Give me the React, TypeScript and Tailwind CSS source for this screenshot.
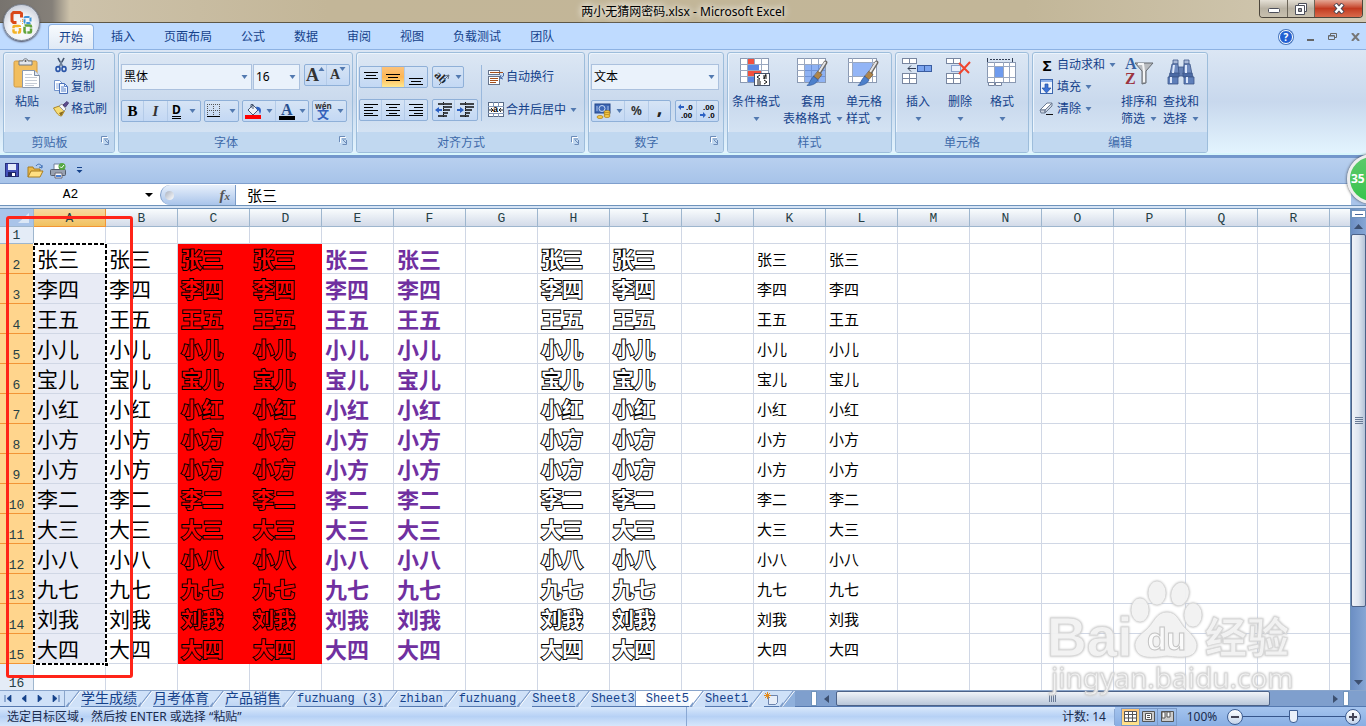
import type { ReactNode } from "react";
import clsx from "clsx";

const names = ["张三", "李四", "王五", "小儿", "宝儿", "小红", "小方", "小方", "李二", "大三", "小八", "九七", "刘我", "大四"];
const columns = "ABCDEFGHIJKLMNOPQR".split("");
const menuTabs = ["开始", "插入", "页面布局", "公式", "数据", "审阅", "视图", "负载测试", "团队"];
const sheets = ["学生成绩", "月考体育", "产品销售", "fuzhuang (3)", "zhiban", "fuzhuang", "Sheet8", "Sheet3", "Sheet5", "Sheet1"];

const cellStyles: Record<string, string> = {
  A: "text-[21px] text-black",
  B: "text-[21px] text-black",
  C: "text-[21px] font-bold text-[#f00] [-webkit-text-stroke:2px_black] [paint-order:stroke_fill]",
  D: "text-[21px] font-bold text-[#f00] [-webkit-text-stroke:2px_black] [paint-order:stroke_fill]",
  E: "text-[22px] font-bold text-[#7030a0]",
  F: "text-[22px] font-bold text-[#7030a0]",
  H: "text-[21px] font-bold text-white [-webkit-text-stroke:2px_black] [paint-order:stroke_fill]",
  I: "text-[21px] font-bold text-white [-webkit-text-stroke:2px_black] [paint-order:stroke_fill]",
  K: "text-[15px] text-black",
  L: "text-[15px] text-black",
};

const Arrow = ({ className = "" }: { className?: string }) => (
  <svg className={clsx("shrink-0", className)} width="7" height="4" viewBox="0 0 7 4">
    <path d="M0.5 0h6L3.5 4z" fill="#5279b0" />
  </svg>
);

/* ---------- small icons ---------- */

const ScissorsIcon = () => (
  <svg width="16" height="16" viewBox="0 0 16 16" fill="none">
    <path d="M5 1l5 9M11 1L6 10" stroke="#6d7f99" strokeWidth="1.6" />
    <path d="M5 1l2 4M11 1L9 5" stroke="#3c4b62" />
    <ellipse cx="5" cy="12" rx="2" ry="2.4" stroke="#2b56a8" strokeWidth="1.6" />
    <ellipse cx="11" cy="12" rx="2" ry="2.4" stroke="#2b56a8" strokeWidth="1.6" />
  </svg>
);

const CopyIcon = () => (
  <svg width="16" height="16" viewBox="0 0 16 16">
    <path d="M1.5 1.5h5l3 3v7h-8z" fill="#fff" stroke="#7394cc" />
    <path d="M3 5h4M3 7h5M3 9h5" stroke="#8eade0" />
    <path d="M6.500 4.500h5l3 3v7h-8z" fill="#f3f8ff" stroke="#4a71b8" />
    <path d="M11.500 4.500v3h3M8 8h3M8 10h5M8 12h5" stroke="#5b83ca" fill="none" />
  </svg>
);

const BrushIcon = () => (
  <svg width="16" height="16" viewBox="0 0 16 16">
    <path d="M0.500 7l6-2 5 5-3 5c-3 0-5-3-8-8z" fill="#f6dc74" stroke="#ad8622" />
    <path d="M6 12l2 3 3-5z" fill="#8a6a1e" />
    <path d="M6 5l3-2 4 5-2 2z" fill="#f6f7fa" stroke="#999" />
    <path d="M10 4l4-3.500 1.500 1.500L12.500 6z" fill="#5f4d8e" stroke="#473a72" />
  </svg>
);

const LauncherIcon = () => (
  <svg width="9" height="9" viewBox="0 0 9 9" fill="none">
    <path d="M0.500 6V0.500H6" stroke="#6b8bb8" />
    <path d="M3 3h4M7.500 4v4.500H3.500M4 4l3 3" stroke="#6b8bb8" />
    <path d="M1.500 7V1.500H7" stroke="#fff" />
  </svg>
);

const lineSets: Record<string, number[][]> = {
  top: [[1, 3, 14], [3, 6, 10], [1, 9, 14]],
  middle: [[1, 5, 14], [3, 8, 10], [1, 11, 14]],
  bottom: [[1, 9, 14], [3, 12, 10], [1, 15, 14]],
  left: [[1, 2, 14], [1, 5, 9], [1, 8, 14], [1, 11, 9], [1, 13, 14]],
  center: [[1, 2, 14], [4, 5, 8], [1, 8, 14], [4, 11, 8], [1, 13, 14]],
  right: [[1, 2, 14], [6, 5, 9], [1, 8, 14], [6, 11, 9], [1, 13, 14]],
};

const LinesIcon = ({ kind }: { kind: string }) => (
  <svg width="16" height="17" viewBox="0 0 16 17">
    {lineSets[kind].map(([x, y, w]) => (
      <rect key={y} x={x} y={y} width={w} height="1" fill="#000" />
    ))}
  </svg>
);

const IndentIcon = ({ out = false }: { out?: boolean }) => (
  <svg width="18" height="16" viewBox="0 0 18 16">
    <path d="M3 2h14M3 14h9M8 5h9M8 8h7M8 11h5" stroke="#111" strokeWidth="1.500" />
    <path d="M8.500 0v16" stroke="#111" strokeDasharray="1 1" />
    {out ? <path d="M0 8l4-3v2h3v2H4v2z" fill="#2d62c4" /> : <path d="M7 8L3 5v2H0v2h3v2z" fill="#2d62c4" />}
  </svg>
);

const OrientationIcon = () => (
  <svg className="overflow-visible" width="17" height="17" viewBox="0 0 17 17">
    <text x="0" y="10" transform="rotate(45 4 8)" fontFamily="Liberation Serif" fontWeight="bold" fontSize="12" fill="#222">ab</text>
    <path d="M5 16L15 6M15 6l-4 1M15 6l-1 4" stroke="#5e6c80" fill="none" />
  </svg>
);

const WrapIcon = () => (
  <svg width="17" height="16" viewBox="0 0 17 16" fill="none">
    <rect x="0.500" y="1.500" width="11" height="4" fill="#fff" stroke="#66748c" />
    <path d="M2 3.500h13" stroke="#a5501c" />
    <rect x="0.500" y="7.500" width="11" height="8" fill="#fff" stroke="#66748c" />
    <path d="M2 9.500h8M2 11.500h8M2 13.500h6" stroke="#a5501c" />
    <path d="M15.500 4v3l-3 2M12 9l1-3M12 9l3 1" stroke="#4a6da8" />
  </svg>
);

const MergeIcon = () => (
  <svg width="17" height="16" viewBox="0 0 17 16">
    <rect x="0.500" y="0.500" width="15" height="14" fill="#fff" stroke="#596b87" />
    <path d="M0 4.500h16M0 11.500h16M5.500 0v4M10.500 0v4M5.500 11v4M10.500 11v4" stroke="#8095b5" />
    <text x="5" y="10" fontFamily="Liberation Sans" fontWeight="bold" fontSize="9">a</text>
    <path d="M1 8h3M3 6l2 2-2 2M15 8h-3M13 6l-2 2 2 2" stroke="#222" fill="none" />
  </svg>
);

const BordersIcon = () => (
  <svg width="14" height="14" viewBox="0 0 14 14" fill="none">
    <path d="M0.500 0v12M6.500 0v12M12.500 0v12M0 0.500h13M0 6.500h13" stroke="#555" strokeDasharray="1 1" />
    <path d="M0 12.500h13" stroke="#000" strokeWidth="1" />
  </svg>
);

const FillColorIcon = () => (
  <svg width="17" height="16" viewBox="0 0 17 16">
    <path d="M3 7l5-5 5 5-5 5z" fill="#eef2f8" stroke="#4b5a73" />
    <path d="M6 5V1.500h2V6" fill="none" stroke="#4b5a73" />
    <path d="M11 4c5-1 6 4 4 7-1-1 0-4-3-4z" fill="#2c60c0" />
    <rect x="0" y="12" width="16" height="4" fill="#f00" />
  </svg>
);

const FontColorIcon = () => (
  <svg className="overflow-visible" width="16" height="17" viewBox="0 0 16 17">
    <text x="2" y="12" fontFamily="Liberation Serif" fontWeight="bold" fontSize="16" fill="#28508e">A</text>
    <rect x="0" y="13" width="16" height="4" />
  </svg>
);

const PinyinIcon = () => (
  <svg className="overflow-visible" width="18" height="18" viewBox="0 0 18 18">
    <text x="0" y="7" fontFamily="Noto Sans" fontWeight="bold" fontSize="8" fill="#333">wén</text>
    <text x="2" y="17" fontFamily="Noto Sans CJK SC" fontWeight="bold" fontSize="12" fill="#3560ba">文</text>
  </svg>
);

const CurrencyIcon = () => (
  <svg width="18" height="17" viewBox="0 0 18 17">
    <rect x="1" y="1" width="15" height="9" fill="#3e68b5" stroke="#254789" />
    <ellipse cx="8" cy="5.500" rx="3" ry="3" fill="none" stroke="#c7d9f5" />
    <path d="M3 3v5M14 3v5" stroke="#a7c0ea" />
    {[9, 11, 13].map((y) => <ellipse key={y} cx="13" cy={y} rx="3" ry="1.500" fill="#f7cb4a" stroke="#a97a12" strokeWidth="0.700" />)}
    <ellipse cx="6" cy="14" rx="3" ry="1.500" fill="#f7cb4a" stroke="#a97a12" strokeWidth="0.700" />
  </svg>
);

const DecimalIcon = ({ more = false }: { more?: boolean }) => (
  <svg className="overflow-visible" width="18" height="16" viewBox="0 0 18 16" fontFamily="Liberation Sans" fontWeight="bold" fontSize="8">
    {more ? (
      <>
        <path d="M1 4l3-3v2h3v2H4v2z" fill="#2d62c4" />
        <text x="9" y="7">.0</text>
        <text x="4" y="15">.00</text>
      </>
    ) : (
      <>
        <text x="4" y="7">.00</text>
        <path d="M7 12L4 9v2H1v2h3v2z" fill="#2d62c4" />
        <text x="9" y="15">.0</text>
      </>
    )}
  </svg>
);

const FillDownIcon = () => (
  <svg width="14" height="16" viewBox="0 0 14 16">
    <rect x="0.500" y="0.500" width="12" height="14" fill="#eef4fd" stroke="#3b66ad" />
    <rect x="1" y="1" width="11" height="2" fill="#8cb0ea" />
    <path d="M5 5h3v4h3l-4.500 5L2 9h3z" fill="#3c73d8" stroke="#24509f" strokeWidth="0.700" />
  </svg>
);

const EraserIcon = () => (
  <svg width="16" height="14" viewBox="0 0 16 14">
    <path d="M1 8l7-7h5l-7 7z" fill="#fff" stroke="#6c7c94" />
    <path d="M1 8h5v3H2zM6 8l7-7v3l-7 7z" fill="#ccd3df" stroke="#6c7c94" />
    <path d="M7 12.500h7" stroke="#111" />
  </svg>
);

const SaveIcon = () => (
  <svg width="15" height="15" viewBox="0 0 15 15">
    <rect x="0.500" y="0.500" width="13" height="13" fill="#4450b8" stroke="#28307d" />
    <rect x="3" y="1" width="8" height="6" fill="#e5ebfa" />
    <rect x="3" y="9" width="8" height="5" fill="#1e2566" />
    <rect x="7" y="10" width="3" height="3" fill="#fff" />
  </svg>
);

const OpenIcon = () => (
  <svg width="17" height="16" viewBox="0 0 17 16">
    <path d="M1 14V4h5l1 2h6v3" fill="#e9b84a" stroke="#a77c21" />
    <path d="M1 14l3-6h12l-3 6z" fill="#ffdf83" stroke="#a77c21" />
    <path d="M9 3c2-3 5-2 6 1M15 5V2M15 5l-3-1" fill="none" stroke="#3f6fb5" />
  </svg>
);

const PrintIcon = () => (
  <svg width="17" height="16" viewBox="0 0 17 16">
    <path d="M4 6V1h7v5" fill="#fff" stroke="#70819b" />
    <rect x="0.500" y="6.500" width="15" height="6" rx="1" fill="#98a1b0" stroke="#555e6d" />
    <path d="M5 10h7v5H5z" fill="#fff" stroke="#667" />
    <circle cx="12" cy="3.500" r="3.500" fill="#55a843" />
    <path d="M10 3.500l1.500 1.500L14 2" stroke="#fff" fill="none" />
    <path d="M6 13h5" stroke="#4a7fd1" strokeWidth="2" />
  </svg>
);

/* ---------- large ribbon icons ---------- */

const PasteIcon = () => (
  <svg width="28" height="32" viewBox="0 0 28 32">
    <rect x="1" y="3" width="23" height="26" rx="1.500" fill="#f2be5e" stroke="#d09a45" />
    <path d="M6 3h4c0-3 5-3 5 0h4v4H6z" fill="#e3e6ea" stroke="#6f7885" />
    <circle cx="12.500" cy="3" r="1" fill="#555" />
    <path d="M9.500 12.500h12l5 5v12h-17z" fill="#fff" stroke="#8b99ae" />
    <path d="M21.500 12.500v5h5" fill="#dfe6f1" stroke="#7d8ca3" />
    <path d="M12 16.500h7M12 19.500h12M12 22.500h12M12 25.500h12M12 27.500h9" stroke="#c6ccd6" />
  </svg>
);

const GridBase = () => (
  <>
    <rect x="0.500" y="0.500" width="28" height="24" fill="#fff" stroke="#8a99b2" />
    <path d="M7.500 0v25M14.500 0v25M21.500 0v25M0 6.500h28M0 12.500h28M0 18.500h28" stroke="#9aa8c0" />
  </>
);

const PaintBrush = () => (
  <g strokeLinecap="round">
    <path d="M28.500 4.500L22 15" stroke="#6d6a66" strokeWidth="4" />
    <path d="M28 4.500L21.500 15" stroke="#e4e4e6" strokeWidth="2" />
    <path d="M21 13.500l4 3-4 5-4-3z" fill="#b08548" stroke="#76552a" strokeWidth="0.700" />
    <path d="M16.500 18.500l4.500 3.500c-2 4-6 5.500-11 5.500 3-2 3-6 6.500-9z" fill="#4d80cb" stroke="#2f589b" strokeWidth="0.700" />
  </g>
);

const ConditionalIcon = () => (
  <svg width="32" height="32" viewBox="0 0 32 32">
    <GridBase />
    <path d="M8 1h6v5H8zM8 13h13v5H8z" fill="#f2503e" />
    <path d="M8 7h11v5H8zM8 19h6v5H8z" fill="#5a86e2" />
    <rect x="14.500" y="15.500" width="15" height="12" fill="#fff" stroke="#46536b" />
    <path d="M20 17l-3 2 3 2M17 22h3M23 18h4M23 20h4M26 16l-2 5M17 24h4M17 26h4M24 22l3 2-3 2" stroke="#111" fill="none" />
  </svg>
);

const TableFormatIcon = () => (
  <svg width="32" height="32" viewBox="0 0 32 32">
    <GridBase />
    <path d="M8 7h20v17H8z" fill="#8eb2f3" />
    <path d="M14.500 7v17M21.500 7v17M8 12.500h20M8 18.500h20" stroke="#6d92d8" />
    <PaintBrush />
  </svg>
);

const CellStyleIcon = () => (
  <svg width="32" height="32" viewBox="0 0 32 32">
    <rect x="0.500" y="0.500" width="28" height="24" fill="#fff" stroke="#8a99b2" />
    <path d="M4.500 0v24M24.500 0v24M0 4.500h28M0 18.500h28" stroke="#9aa8c0" />
    <rect x="5" y="5" width="19" height="13" fill="#93b5f6" />
    <PaintBrush />
  </svg>
);

const SheetBlocks = () => (
  <>
    <rect x="0.500" y="0.500" width="14" height="5" fill="#fff" stroke="#7886a0" />
    <path d="M7.500 0v6" stroke="#7886a0" />
    <rect x="0.500" y="15.500" width="14" height="10" fill="#fff" stroke="#7886a0" />
    <path d="M7.500 15v10M0 20.500h14" stroke="#7886a0" />
  </>
);

const InsertCellsIcon = () => (
  <svg width="32" height="32" viewBox="0 0 32 32">
    <SheetBlocks />
    <path d="M6 10.500h8M6 10.500l3-3M6 10.500l3 3" stroke="#333f55" fill="none" />
    <rect x="15.500" y="7.500" width="14" height="6" fill="#7ba4ee" stroke="#3a5da1" />
    <path d="M22.500 8v6" stroke="#3a5da1" />
  </svg>
);

const DeleteCellsIcon = () => (
  <svg width="28" height="32" viewBox="0 0 28 32">
    <SheetBlocks />
    <path d="M5.500 7.500h9v6h-9z" stroke="#3a5da1" strokeDasharray="1 1" fill="#eaf1fd" />
    <path d="M13 5l10 10M24 4L13 16" stroke="#f0452e" strokeWidth="2" />
  </svg>
);

const FormatCellsIcon = () => (
  <svg width="32" height="32" viewBox="0 0 32 32">
    <path d="M1.500 0v4M26.500 0v4" stroke="#333f55" />
    <path d="M4 1.500h20" stroke="#333f55" strokeDasharray="2 1" />
    <rect x="1.500" y="4.500" width="28" height="20" fill="#fff" stroke="#8a99b2" />
    <path d="M8.500 4v20M17.500 4v20M23.500 4v20M1 8.500h28M1 19.500h28" stroke="#9aa8c0" />
    <rect x="9" y="9" width="8" height="10" fill="#6e9bee" />
    <path d="M2.500 24.500h6v3h-6zM9.500 24.500h6v3h-6z" fill="#fff" stroke="#7886a0" />
  </svg>
);

const SortIcon = () => (
  <svg className="overflow-visible" width="32" height="32" viewBox="0 0 32 32">
    <text x="2" y="11" fontFamily="Liberation Serif" fontWeight="bold" fontSize="16" fill="#36609f">A</text>
    <text x="2" y="26" fontFamily="Liberation Serif" fontWeight="bold" fontSize="16" fill="#9c3440">Z</text>
    <path d="M12 5h18l-7 8v12l-4 1V13z" fill="#b9bcc0" stroke="#65696f" />
    <path d="M15 6h5l1 7v11" fill="none" stroke="#f4f5f6" strokeWidth="2" />
  </svg>
);

const BinocularsIcon = () => (
  <svg width="30" height="32" viewBox="0 0 30 32" stroke="#3c5588" strokeWidth="0.800">
    <rect x="12" y="9" width="6" height="9" fill="#6580b3" />
    <path d="M7 2h5v4H7zM18 2h5v4h-5z" fill="#a9b9d8" />
    <path d="M6 6h6l1 10H4zM18 6h6l2 10h-9z" fill="#6f8bbf" />
    <path d="M4 15h9v4H3zM17 15h9l1 4H17z" fill="#4b6aa4" />
    <path d="M2 19h10v7H2zM18 19h10v7H18z" fill="#5f7fb9" />
    <path d="M5 19v6M21 19v6M8 7l-1 8M20 7v8" stroke="#dce7fa" strokeWidth="2" />
  </svg>
);

const OfficeLogo = () => (
  <svg width="24" height="24" viewBox="0 0 24 24" fill="none">
    <path d="M11.500 6.500V2.500L10 1.500H3.500L2 3v7l1.500 1.500h3" stroke="#d9481a" strokeWidth="3" />
    <rect x="14.500" y="6" width="6" height="6" rx="1" stroke="#3f93d6" strokeWidth="2" strokeDasharray="4 1" />
    <rect x="3.500" y="15" width="6.500" height="6.500" rx="1" stroke="#f3b226" strokeWidth="2.500" strokeDasharray="6 1" />
    <rect x="14.500" y="14.500" width="6.500" height="7" rx="1" stroke="#62a33a" strokeWidth="2.500" strokeDasharray="7 1" />
    <path d="M10 10h4M12.500 8v6" stroke="#f0a648" strokeDasharray="1 1" />
  </svg>
);

/* ---------- ribbon building blocks ---------- */

const Group = ({ title, width, launcher = false, children }: { title: string; width: string; launcher?: boolean; children: ReactNode }) => (
  <section className={clsx("flex shrink-0 flex-col overflow-hidden rounded-[3px] border border-[#9dbddb] bg-linear-to-b from-[#dce7f4] via-[#c9d9ed] to-[#dbe9f7] shadow-[inset_1px_1px_0_#ecf4fc]", width)}>
    <div className="flex h-[79px]">{children}</div>
    <div className="flex h-5 items-center bg-[#c1d8f0] pt-px text-[#3e6aaa]">
      <h2 className={clsx("flex-1 text-center", launcher && "pr-[6px]")}>{title}</h2>
      {launcher && (
        <button aria-label={`${title}设置`} className="h-full w-[13px] pb-1">
          <LauncherIcon />
        </button>
      )}
    </div>
  </section>
);

const ButtonBox = ({ children }: { children: ReactNode }) => (
  <div className="flex h-[22px] divide-x divide-[#b4cbe8] rounded-[2px] border border-[#8fb0d8] bg-linear-to-b from-[#d6e4f5] to-[#c3d8f4]">{children}</div>
);

const Tool = ({ label, width = "w-[22px]", className = "", children }: { label: string; width?: string; className?: string; children: ReactNode }) => (
  <button aria-label={label} className={clsx("flex items-center justify-center gap-1", width, className)}>
    {children}
  </button>
);

const Big = ({ icon, lines, width, single = false }: { icon: ReactNode; lines: string[]; width: string; single?: boolean }) => (
  <button className={clsx("flex flex-col items-center pt-[5px] leading-[17px]", width)}>
    <span className="mb-[3px] flex h-8 items-center">{icon}</span>
    <span className="whitespace-nowrap">{lines[0]}</span>
    <span className="flex h-[17px] items-center gap-[5px] whitespace-nowrap">
      {!single && lines[1]}
      <Arrow />
    </span>
  </button>
);

const Small = ({ icon, label, arrow = false }: { icon: ReactNode; label: string; arrow?: boolean }) => (
  <button className="flex h-[22px] items-center whitespace-nowrap">
    <span className="flex w-[18px] justify-center">{icon}</span>
    <span className="ml-px">{label}</span>
    {arrow && <Arrow className="ml-1" />}
  </button>
);

const Combo = ({ label, value, width }: { label: string; value: string; width: string }) => (
  <label className={clsx("relative flex h-[26px] items-center border border-[#abc1de] bg-[#eaf2fb]", width)}>
    <select aria-label={label} className="h-full w-full appearance-none px-[2px] text-[12px] text-black outline-none">
      <option>{value}</option>
    </select>
    <Arrow className="pointer-events-none absolute right-[3px]" />
  </label>
);

const Ribbon = () => (
  <div className="flex gap-[3px] border-t border-[#8db2e3] border-b-2 border-b-[#d8f6fc] bg-linear-to-b from-[#dbe6f4] via-[#c8d8ed] to-[#e3f4fe] px-[3px] pt-[2px]">
    <Group title="剪贴板" width="w-[112px]" launcher>
      <div className="pl-[2px]">
        <Big icon={<PasteIcon />} lines={["粘贴"]} width="w-[42px]" single />
      </div>
      <div className="flex flex-col pt-px pl-1">
        <Small icon={<ScissorsIcon />} label="剪切" />
        <Small icon={<CopyIcon />} label="复制" />
        <Small icon={<BrushIcon />} label="格式刷" />
      </div>
    </Group>

    <Group title="字体" width="w-[235px]" launcher>
      <div className="flex flex-col gap-[10px] pt-[11px] pl-[2px]">
        <div className="flex gap-px">
          <Combo label="字体" value="黑体" width="w-[131px]" />
          <Combo label="字号" value="16" width="w-[47px]" />
          <div className="pl-[3px]">
            <ButtonBox>
              <Tool label="增大字号" className="font-['Liberation_Serif'] text-[18px] font-bold text-[#333]">
                <span className="flex">A<Arrow className="-ml-px rotate-180" /></span>
              </Tool>
              <Tool label="减小字号" className="font-['Liberation_Serif'] text-[14px] font-bold text-[#333]">
                <span className="flex">A<Arrow className="-ml-px" /></span>
              </Tool>
            </ButtonBox>
          </div>
        </div>
        <div className="flex gap-[3px]">
          <ButtonBox>
            <Tool label="加粗" className="font-['Liberation_Serif'] text-[15px] font-bold text-black">B</Tool>
            <Tool label="倾斜" width="w-6" className="font-['Liberation_Serif'] text-[15px] font-bold italic text-[#333]">I</Tool>
            <Tool label="下划线" width="w-8" className="text-black">
              <span className="mr-1 border-b-3 border-double border-black text-[12px] leading-[12px] font-bold">D</span>
              <Arrow />
            </Tool>
          </ButtonBox>
          <ButtonBox>
            <Tool label="边框" width="w-[33px]"><BordersIcon /><Arrow className="ml-1" /></Tool>
          </ButtonBox>
          <ButtonBox>
            <Tool label="填充颜色" width="w-[33px]"><FillColorIcon /><Arrow /></Tool>
            <Tool label="字体颜色" width="w-8"><FontColorIcon /><Arrow /></Tool>
          </ButtonBox>
          <ButtonBox>
            <Tool label="拼音指南" width="w-[33px]"><PinyinIcon /><Arrow /></Tool>
          </ButtonBox>
        </div>
      </div>
    </Group>

    <Group title="对齐方式" width="w-[229px]" launcher>
      <div className="flex flex-col gap-[11px] pt-[13px] pl-[2px]">
        <div className="flex gap-1">
          <ButtonBox>
            <Tool label="顶端对齐"><LinesIcon kind="top" /></Tool>
            <Tool label="垂直居中" width="w-[23px]" className="bg-linear-to-b from-[#fcc27a] via-[#fdb652] to-[#ffe88f]"><LinesIcon kind="middle" /></Tool>
            <Tool label="底端对齐"><LinesIcon kind="bottom" /></Tool>
          </ButtonBox>
          <ButtonBox>
            <Tool label="方向" width="w-[30px]"><OrientationIcon /><Arrow /></Tool>
          </ButtonBox>
        </div>
        <div className="flex gap-1">
          <ButtonBox>
            <Tool label="文本左对齐"><LinesIcon kind="left" /></Tool>
            <Tool label="居中" width="w-[23px]"><LinesIcon kind="center" /></Tool>
            <Tool label="文本右对齐"><LinesIcon kind="right" /></Tool>
          </ButtonBox>
          <ButtonBox>
            <Tool label="减少缩进量"><IndentIcon out /></Tool>
            <Tool label="增加缩进量"><IndentIcon /></Tool>
          </ButtonBox>
        </div>
      </div>
      <div className="mt-3 ml-[3px] h-14 w-px bg-[#9ab8dc]" />
      <div className="flex flex-col gap-[11px] pt-[13px] pl-[5px]">
        <Small icon={<WrapIcon />} label="自动换行" />
        <Small icon={<MergeIcon />} label="合并后居中" arrow />
      </div>
    </Group>

    <Group title="数字" width="w-[136px]" launcher>
      <div className="flex flex-col gap-[10px] pt-[11px] pl-[2px]">
        <Combo label="数字格式" value="文本" width="w-32" />
        <div className="flex gap-1">
          <ButtonBox>
            <Tool label="会计数字格式" width="w-[33px]"><CurrencyIcon /><Arrow /></Tool>
            <Tool label="百分比样式" width="w-6" className="font-bold text-[#333]">%</Tool>
            <Tool label="千位分隔样式" width="w-[21px]" className="pb-2 text-[20px] font-bold text-[#222]">,</Tool>
          </ButtonBox>
          <ButtonBox>
            <Tool label="增加小数位数" width="w-[21px]"><DecimalIcon more /></Tool>
            <Tool label="减少小数位数" width="w-[21px]"><DecimalIcon /></Tool>
          </ButtonBox>
        </div>
      </div>
    </Group>

    <Group title="样式" width="w-[165px]">
      <div className="flex gap-1 pl-1">
        <Big icon={<ConditionalIcon />} lines={["条件格式"]} width="w-12" single />
        <Big icon={<TableFormatIcon />} lines={["套用", "表格格式"]} width="w-[58px]" />
        <Big icon={<CellStyleIcon />} lines={["单元格", "样式"]} width="w-9" />
      </div>
    </Group>

    <Group title="单元格" width="w-[134px]">
      <div className="flex pl-px">
        <Big icon={<InsertCellsIcon />} lines={["插入"]} width="w-[42px]" single />
        <Big icon={<DeleteCellsIcon />} lines={["删除"]} width="w-[42px]" single />
        <Big icon={<FormatCellsIcon />} lines={["格式"]} width="w-[42px]" single />
      </div>
    </Group>

    <Group title="编辑" width="w-[176px]">
      <div className="flex w-[85px] flex-col pt-px pl-[5px]">
        <Small icon={<span className="text-[15px] font-bold text-black">Σ</span>} label="自动求和" arrow />
        <Small icon={<FillDownIcon />} label="填充" arrow />
        <Small icon={<EraserIcon />} label="清除" arrow />
      </div>
      <Big icon={<SortIcon />} lines={["排序和", "筛选"]} width="w-[42px]" />
      <Big icon={<BinocularsIcon />} lines={["查找和", "选择"]} width="w-[42px]" />
    </Group>
  </div>
);

const TitleBar = () => (
  <header className="relative flex h-[23px] items-center justify-center border-b border-[#5d5747] bg-[linear-gradient(90deg,#77736e_0,#858079_52px,#cdc2aa_70px,#c3b698_24%,#c2b698_75%,#d3cab4_100%)]">
    <h1 className="pt-px text-[12px] text-black [text-shadow:0_0_6px_#fff,0_0_8px_#fff]">两小无猜网密码.xlsx - Microsoft Excel</h1>
    <div className="absolute top-0 right-[3px] flex h-[18px] overflow-hidden rounded-b-[4px] border border-t-0 border-[#4c463c]">
      <button aria-label="最小化" className="flex w-7 items-end justify-center border-r border-[#6b6558] bg-linear-to-b from-[#e5e0d6] via-[#b9b2a3] to-[#c8c0ae] pb-1">
        <svg width="12" height="5" viewBox="0 0 12 5"><rect x="0.500" y="0.500" width="11" height="4" rx="1" fill="#fff" stroke="#4c4f5a" /></svg>
      </button>
      <button aria-label="还原" className="flex w-[27px] items-center justify-center border-r border-[#6b6558] bg-linear-to-b from-[#e5e0d6] via-[#b9b2a3] to-[#c8c0ae]">
        <svg width="12" height="12" viewBox="0 0 12 12" stroke="#4c4f5a" fill="#fff"><path d="M3.500 0.500h8v8h-8z" /><path d="M0.500 2.500h9v9h-9z" /><path d="M3.500 5.500h3v3h-3z" fill="#999" /></svg>
      </button>
      <button aria-label="关闭" className="flex w-[47px] items-center justify-center bg-linear-to-b from-[#e4a694] via-[#c23a20] to-[#d9694a]">
        <svg width="12" height="11" viewBox="0 0 12 11"><path d="M2 1l8 9M10 1L2 10" stroke="#4f4450" strokeWidth="4.500" /><path d="M2.500 1.500l7 8M9.500 1.500l-7 8" stroke="#fff" strokeWidth="2.500" /></svg>
      </button>
    </div>
    <button aria-label="Office 按钮" className="absolute top-1 left-[3px] z-20 flex size-[37px] items-center justify-center rounded-full border border-[#7f8794] bg-[radial-gradient(circle_at_50%_65%,#ffffff_0,#f0f2f6_45%,#c3c9d6_85%)] shadow-[0_1px_2px_#445]">
      <OfficeLogo />
    </button>
  </header>
);

const MenuBar = () => (
  <nav className="flex h-[26px] items-end bg-[#bfdbff] pl-12">
    {menuTabs.map((tab, i) => (
      <button
        key={tab}
        className={clsx(
          "flex items-center text-[12px]",
          i === 0 ? "mr-[3px] -mb-px h-[26px] rounded-t-[4px] border border-b-0 border-[#8db2e3] bg-linear-to-b from-[#f8fbfe] to-[#dfe9f5] px-[10px]" : "mr-px h-[25px] px-[14px]",
        )}
      >
        {tab}
      </button>
    ))}
    <div className="ml-auto flex h-[25px] items-center gap-[14px] pr-[6px]">
      <button aria-label="帮助" className="flex size-[14px] items-center justify-center rounded-full border border-white bg-[#2360d2] text-[10px] font-bold text-white shadow-[0_0_0_1px_#4b78bd]">?</button>
      <button aria-label="最小化窗口" className="mt-[6px] h-[2px] w-[7px] bg-[#666]" />
      <button aria-label="还原窗口"><svg width="9" height="7" viewBox="0 0 9 7" fill="none" stroke="#666"><path d="M2.500 2V0.500h6v4H7M0.500 2.500h6v4h-6zM1 3h5" /></svg></button>
      <button aria-label="关闭窗口"><svg width="9" height="8" viewBox="0 0 9 8" stroke="#777" strokeWidth="2"><path d="M1 0l7 8M8 0L1 8" /></svg></button>
    </div>
  </nav>
);

const QuickAccess = () => (
  <div className="flex h-[29px] items-center gap-2 border-t-3 border-b border-t-[#7397cc] border-b-[#7f9fcd] bg-linear-to-b from-[#b8d0ef] to-[#a7c3e9] pl-[5px]">
    <button aria-label="保存"><SaveIcon /></button>
    <button aria-label="打开" className="-ml-px"><OpenIcon /></button>
    <button aria-label="打印" className="-ml-[2px]"><PrintIcon /></button>
    <button aria-label="自定义快速访问工具栏" className="ml-px">
      <svg width="7" height="7" viewBox="0 0 7 7" fill="#15428b"><path d="M1 0h5v1H1zM0.500 3h6L3.500 6z" /></svg>
    </button>
  </div>
);

const FormulaBar = () => (
  <div className="flex h-[22px] border-b border-[#6f93bb] bg-white pt-px text-[15px] text-black">
    <div className="flex w-40 items-center">
      <input aria-label="名称框" defaultValue="A2" className="w-[145px] bg-transparent pr-1 text-center font-['Liberation_Mono'] text-[13px] outline-none" />
      <button aria-label="名称列表"><svg width="8" height="4" viewBox="0 0 8 4"><path d="M0 0h8L4 4z" /></svg></button>
    </div>
    <div className="flex w-[76px] items-center justify-between rounded-l-full border-r border-l border-[#7c9cc8] bg-linear-to-b from-[#e8f0fb] to-[#a9c4ea] pr-[5px] pl-1">
      <span className="size-[9px] rounded-full bg-linear-to-br from-[#aab2c0] to-white" />
      <button aria-label="插入函数" className="font-['Liberation_Serif'] text-[15px] leading-4 font-bold text-[#555] italic">f<span className="text-[11px]">x</span></button>
    </div>
    <input aria-label="编辑栏" defaultValue="张三" className="min-w-0 flex-1 pl-[11px] outline-none" />
    <button aria-label="展开编辑栏" className="w-[15px] bg-[#a9c4ea]" />
  </div>
);

const headNumber = "border-r border-b p-0 text-center font-['Liberation_Mono'] text-[13px] font-normal leading-[14px]";

const rowHeight = (row: number) => (row === 1 ? "h-[17px]" : row === 16 ? "h-[28px]" : "h-[30px]");

const Sheet = () => (
  <div className="relative min-w-0 flex-1 overflow-hidden bg-white">
    {/* the unlabelled last column takes up the rest of the pane */}
    <table className="w-full table-fixed border-separate border-spacing-0 text-[#263f46]">
      <thead>
        <tr className="h-[18px]">
          <th className={clsx(headNumber, "w-[34px] border-[#9eb6ce] bg-[#a9c4e9]")}>
            <svg className="mr-1 ml-auto" width="11" height="10" viewBox="0 0 11 10"><path d="M11 0v10H0z" fill="#dbe7f6" /></svg>
          </th>
          {columns.map((c) => (
            <th
              key={c}
              scope="col"
              className={clsx(headNumber, "w-[72px] pt-[2px]", c === "A" ? "border-[#f29536] bg-linear-to-b from-[#f9d99f] to-[#f1c15f]" : "border-[#9eb6ce] bg-linear-to-b from-[#f9fcfd] to-[#d3dbe9]")}
            >
              {c}
            </th>
          ))}
          <td className="border-b border-[#9eb6ce] bg-linear-to-b from-[#f9fcfd] to-[#d3dbe9]" />
        </tr>
      </thead>
      <tbody>
        {Array.from({ length: 16 }, (_, i) => i + 1).map((row) => {
          const filled = row >= 2 && row <= 15;
          return (
            <tr key={row} className={rowHeight(row)}>
              <th scope="row" className={clsx(headNumber, "align-bottom", filled ? "border-[#f29536] bg-[#ffd58d]" : "border-[#9eb6ce] bg-[#e4ecf7]")}>
                {row}
              </th>
              {columns.map((c) => {
                const red = filled && (c === "C" || c === "D");
                return (
                  <td
                    key={c}
                    className={clsx(
                      "border-r border-b p-0 pl-[3px] leading-[16px] whitespace-nowrap",
                      red ? "border-[#f00] bg-[#f00]" : "border-[#d0d7e5]",
                      c === "A" && row >= 3 && filled && "bg-[#e8ebf5]",
                      filled && cellStyles[c],
                    )}
                  >
                    {filled && cellStyles[c] ? names[row - 2] : null}
                  </td>
                );
              })}
              <td className="border-b border-[#d0d7e5] p-0" />
            </tr>
          );
        })}
      </tbody>
    </table>
    {/* copied range */}
    <svg className="pointer-events-none absolute top-[34px] left-[33px]" width="76" height="424" viewBox="0 0 76 424" fill="none">
      <rect x="1" y="1" width="72" height="420" stroke="#fff" strokeWidth="2" />
      <rect x="1" y="1" width="72" height="420" stroke="#000" strokeWidth="2" strokeDasharray="4 2" />
      <rect x="71.500" y="419.500" width="4" height="4" fill="#000" stroke="#fff" />
    </svg>
  </div>
);

const VerticalScroll = () => (
  <div className="flex w-4 flex-col items-center border-l border-[#6f93bb] bg-linear-to-r from-[#6c8fc4] to-[#86a6d4]">
    <div className="mt-px flex h-2 w-full items-center justify-center border border-[#6f93bb] bg-white"><span className="h-px w-2 bg-[#49689a]" /></div>
    <button aria-label="向上滚动" className="flex h-4 items-center"><svg width="9" height="5" viewBox="0 0 9 5"><path d="M4.500 0L9 5H0z" fill="#3d5070" /></svg></button>
    <div className="flex w-full flex-[374] items-center justify-center rounded-[2px] border border-[#4c6288] bg-linear-to-r from-[#f0f3f8] via-[#dfe6f0] to-[#b5c3d8]">
      <svg width="8" height="8" viewBox="0 0 8 8"><path d="M0 0.500h8M0 2.500h8M0 4.500h8M0 6.500h8" stroke="#6a7b96" /></svg>
    </div>
    <div className="flex-[67]" />
    <button aria-label="向下滚动" className="flex h-4 items-center"><svg width="9" height="5" viewBox="0 0 9 5"><path d="M0 0h9L4.500 5z" fill="#3d5070" /></svg></button>
  </div>
);

const Slash = ({ left = "#cfe1f8", right = "#cfe1f8" }: { left?: string; right?: string }) => (
  <svg className="shrink-0" width="16" height="16" viewBox="0 0 16 16">
    <path d="M0 0h14L2 16H0z" fill={left} />
    <path d="M15 0h1v16H3z" fill={right} />
    <path d="M0 16l4-5v5z" fill="#7d9cc9" />
    <path d="M14 0L2 15.500" stroke="#7d9cc9" />
    <path d="M15.500 0L3.500 15.500" stroke="#fff" />
  </svg>
);

const HorizontalBar = () => (
  <div className="flex h-[17px] items-stretch border-t border-b border-t-[#8aa5cb] border-b-[#5579b0] bg-[#7f9fcd] font-['Liberation_Mono','Noto_Sans_CJK_SC',monospace] text-[12px] text-[#15428b]">
    <div className="flex w-[65px] shrink-0 items-center justify-around border-r border-[#8aa5cb] bg-[#cfe1f8]">
      {["M1 0v7M7 0v7L3 3.500z", "M6 0v7L2 3.500z", "M2 0v7l4-3.500z", "M7 0v7M1 0v7l4-3.500z"].map((d, i) => (
        <button key={d} aria-label={["第一张", "上一张", "下一张", "最后一张"][i]}>
          <svg width="8" height="7" viewBox="0 0 8 7"><path d={d} fill="#15428b" stroke="#15428b" strokeWidth="0.700" /></svg>
        </button>
      ))}
    </div>
    {sheets.map((name, i) => {
      const active = name === "Sheet5";
      return (
        <button key={name} className="flex shrink-0 items-stretch">
          {active ? <span className="w-[11px] border-l border-[#7d9cc9] bg-white" /> : <Slash left={sheets[i - 1] === "Sheet5" ? "#fff" : "#cfe1f8"} />}
          <span className={clsx("flex items-center", active ? "bg-linear-to-b from-white to-[#f0f6fd]" : "bg-linear-to-b from-[#dceafa] to-[#bfd6f4]", /^[a-zS]/.test(name) ? "text-[12px]" : "text-[14px]")}>{name}</span>
        </button>
      );
    })}
    <Slash />
    <button aria-label="插入工作表" className="flex items-center bg-[#cfe1f8]">
      <svg width="15" height="14" viewBox="0 0 15 14"><path d="M4.500 3.500h9v7l-2 2h-7z" fill="#e6edf8" stroke="#6c84ae" /><path d="M3.500 0v7M0 3.500h7M1 1l5 5M6 1L1 6" stroke="#e28a1c" /></svg>
    </button>
    <Slash right="#8fb0dc" />
    <div className="flex min-w-0 flex-1 items-stretch">
      <span className="ml-auto w-[6px] shrink-0 border border-[#6f93bb] bg-white" />
      <button aria-label="向左滚动" className="flex w-[19px] items-center justify-center"><svg width="5" height="8" viewBox="0 0 5 8"><path d="M5 0v8L0 4z" fill="#3d5070" /></svg></button>
      <div className="flex w-[434px] items-center justify-center rounded-[2px] border border-[#4c6288] bg-linear-to-b from-[#f0f3f8] to-[#b9c7da]">
        <svg width="8" height="7" viewBox="0 0 8 7"><path d="M0.500 0v7M2.500 0v7M4.500 0v7M6.500 0v7" stroke="#6a7b96" /></svg>
      </div>
      <span className="w-[57px]" />
      <button aria-label="向右滚动" className="flex w-4 items-center justify-center"><svg width="5" height="8" viewBox="0 0 5 8"><path d="M0 0v8l5-4z" fill="#3d5070" /></svg></button>
      <span className="mr-[17px] w-[6px] shrink-0 border border-[#6f93bb] bg-white" />
    </div>
  </div>
);

const StatusBar = () => (
  <footer className="flex h-[19px] items-center bg-linear-to-b from-[#d9e8fb] via-[#b6d1f5] to-[#d6e6fb] pl-[7px] text-[12px] text-[#1a2c4e]">
    <span className="flex-1">选定目标区域，然后按 ENTER 或选择 “粘贴”</span>
    <div className="flex h-full flex-1 items-center border-l border-[#8aa8d3]">
      <span className="ml-auto border-r border-[#8aa8d3] pr-2">计数: 14</span>
      <div className="flex h-full items-center bg-linear-to-b from-[#a5c4ee] to-[#88aee3] pl-[6px]">
        <div className="flex h-[18px] items-center divide-x divide-[#7b9ac8] border border-[#7b9ac8]">
          <button aria-label="普通" className="flex h-full w-[18px] items-center justify-center bg-linear-to-b from-[#fbc478] to-[#ffe38c]">
            <svg width="13" height="11" viewBox="0 0 13 11"><path d="M0.500 0.500h12v10h-12zM4.500 0v11M8.500 0v11M0 3.500h13M0 7h13" fill="#fff" stroke="#555" /></svg>
          </button>
          <button aria-label="页面布局视图" className="flex h-full w-[18px] items-center justify-center">
            <svg width="13" height="11" viewBox="0 0 13 11"><path d="M0.500 0.500h12v10h-12z" fill="#ccc" stroke="#555" /><path d="M3.500 2.500h6v6h-6zM5 4.500h3M5 6.500h3" fill="#fff" stroke="#555" /></svg>
          </button>
          <button aria-label="分页预览" className="flex h-full w-[18px] items-center justify-center">
            <svg width="13" height="11" viewBox="0 0 13 11"><path d="M0.500 0.500h12v10h-12z" fill="#ccc" stroke="#555" /><path d="M1 1h3v6H1zM6 1h3v5H6z" fill="#fff" stroke="#555" /></svg>
          </button>
        </div>
        <span className="w-[50px] text-center">100%</span>
        <button aria-label="缩小" className="flex size-4 items-center justify-center rounded-full border border-[#3d5d92] bg-linear-to-b from-white to-[#c3d3ea]"><span className="h-[2px] w-2 bg-[#445]" /></button>
        <input aria-label="显示比例" type="range" defaultValue="49" className="h-4 w-[102px] appearance-none bg-[linear-gradient(#36558b,#36558b)] bg-[length:100%_1px] bg-center bg-no-repeat [&::-webkit-slider-thumb]:h-[13px] [&::-webkit-slider-thumb]:w-[9px] [&::-webkit-slider-thumb]:appearance-none [&::-webkit-slider-thumb]:rounded-b-[4px] [&::-webkit-slider-thumb]:border [&::-webkit-slider-thumb]:border-[#3d5d92] [&::-webkit-slider-thumb]:bg-[#e9f0fa]" />
        <button aria-label="放大" className="mr-[5px] flex size-4 items-center justify-center rounded-full border border-[#3d5d92] bg-linear-to-b from-white to-[#c3d3ea]">
          <svg width="8" height="8" viewBox="0 0 8 8"><path d="M4 0v8M0 4h8" stroke="#445" strokeWidth="2" /></svg>
        </button>
      </div>
    </div>
  </footer>
);

const Watermark = () => (
  <svg className="pointer-events-none absolute right-[71px] bottom-[28px] z-10 overflow-visible drop-shadow-[0_0_1px_#bbb]" width="250" height="122" viewBox="0 0 250 122" fill="#fff" fillOpacity="0.75" stroke="#d8d8d8">
    <ellipse cx="95" cy="34" rx="9" ry="12" />
    <ellipse cx="112" cy="17" rx="9" ry="12" />
    <ellipse cx="135" cy="18" rx="9" ry="12" transform="rotate(15 135 18)" />
    <ellipse cx="148" cy="39" rx="9" ry="12" />
    <path d="M122 36c-11 0-13 11-21 18-9 7-13 12-10 20 4 9 16 8 31 6 15 2 26 2 29-6 3-8-2-13-9-20-8-7-9-18-20-18z" />
    <g fontFamily="Liberation Sans, Noto Sans CJK SC, sans-serif" fontWeight="bold">
      <text x="2" y="80" fontSize="55">Bai</text>
      <text x="102" y="74" fontSize="32" stroke="#c4c4c4">du</text>
      <text x="160" y="77" fontSize="42" fontFamily="Noto Sans CJK SC">经验</text>
    </g>
    <text x="6" y="112" fontSize="28" fontFamily="Noto Sans">jingyan.baidu.com</text>
  </svg>
);

export default function App() {
  return (
    <div className="relative flex h-screen flex-col overflow-hidden bg-[#bfdbff] font-['Noto_Sans','Noto_Sans_CJK_SC',sans-serif] text-[12px] leading-4 text-[#15428b]">
      <TitleBar />
      <MenuBar />
      <Ribbon />
      <QuickAccess />
      <FormulaBar />
      <div className="h-[2px] shrink-0 bg-[#d6e4f5]" />
      <main className="flex min-h-0 flex-1 border-t border-[#6f93bb]">
        <Sheet />
        <VerticalScroll />
      </main>
      <HorizontalBar />
      <StatusBar />
      {/* highlight around column A */}
      <div className="pointer-events-none absolute top-[216px] left-[6px] h-[462px] w-[127px] rounded-[3px] border-3 border-[#ff2418]" />
      <Watermark />
      <div className="absolute top-[154px] -right-[31px] z-10 flex size-[50px] items-center rounded-full border-3 border-[#eee] bg-linear-to-b from-[#5cc96b] to-[#35c44b] pl-px text-[12px] font-bold text-white shadow-[0_0_3px_#333]">35</div>
    </div>
  );
}
